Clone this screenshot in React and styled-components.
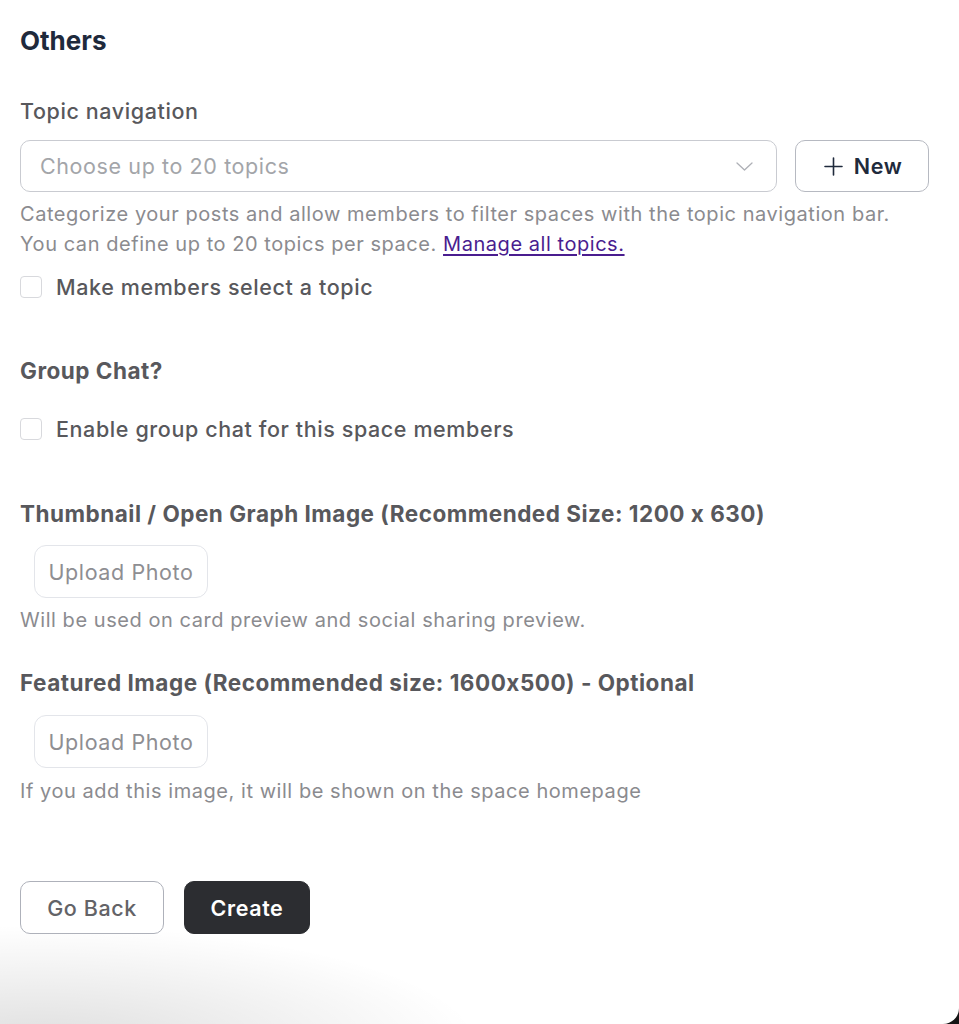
import React from "react";
import styled, { createGlobalStyle } from "styled-components";

const Global = createGlobalStyle`
  html, body { margin: 0; padding: 0; background: #141414; }
  body { font-family: Inter, "Noto Sans", "Liberation Sans", sans-serif; -webkit-font-smoothing: antialiased; }
  * { box-sizing: border-box; }
`;

const Page = styled.div`
  width: 959px;
  height: 1024px;
  background:
    radial-gradient(ellipse 440px 120px at 40px 1045px, rgba(0,0,0,0.13), rgba(0,0,0,0) 100%),
    #ffffff;
  border-bottom-right-radius: 16px;
  padding: 26px 30px 0 20px;
  display: flex;
  flex-direction: column;
  overflow: hidden;
`;

const Heading = styled.h2`
  margin: 0;
  font-size: 26px;
  line-height: 30px;
  font-weight: 700;
  color: #1f2a3c;
`;

const Label = styled.div`
  margin-top: ${(p) => p.$mt}px;
  font-size: ${(p) => (p.$bold ? "22.5px" : "21.5px")};
  line-height: 30px;
  font-weight: ${(p) => (p.$bold ? 700 : 500)};
  color: #58585c;
  letter-spacing: ${(p) => (p.$bold ? "0.5px" : "0.6px")};
`;

const SelectRow = styled.div`
  margin-top: 14px;
  display: flex;
  gap: 18px;
  width: 909px;
`;

const Select = styled.div`
  flex: 0 0 757px;
  height: 52px;
  border: 1px solid #c9cbd1;
  border-radius: 10px;
  display: flex;
  align-items: center;
  justify-content: space-between;
  padding: 0 23px 0 19px;
  font-size: 21.5px;
  letter-spacing: 0.6px;
  color: #a3a5a9;
`;

const NewButton = styled.button`
  flex: 0 0 134px;
  height: 52px;
  border: 1px solid #b6b9c1;
  border-radius: 10px;
  background: #fff;
  display: flex;
  align-items: center;
  justify-content: center;
  gap: 11px;
  font-family: inherit;
  font-size: 21.5px;
  letter-spacing: 0.6px;
  font-weight: 600;
  color: #1f2a3c;
  padding: 0 0 0 2px;
`;

const Help = styled.p`
  margin: ${(p) => p.$mt}px 0 0;
  font-size: 20px;
  letter-spacing: 0.55px;
  line-height: ${(p) => p.$lh || 30}px;
  color: #8b8b8f;
`;

const Link = styled.a`
  color: #4a1d8f;
  text-decoration: underline;
  text-underline-offset: 3px;
`;

const CheckRow = styled.label`
  margin-top: ${(p) => p.$mt}px;
  display: flex;
  align-items: center;
  gap: 14px;
  height: 30px;
  font-size: 21.5px;
  letter-spacing: 0.6px;
  font-weight: 500;
  color: #58585c;
`;

const Box = styled.span`
  width: 22px;
  height: 22px;
  border: 1px solid #d8d9dd;
  border-radius: 4px;
  background: #fff;
  flex: 0 0 22px;
`;

const UploadButton = styled.button`
  margin-top: ${(p) => p.$mt}px;
  margin-left: 14px;
  align-self: flex-start;
  width: 174px;
  height: 53px;
  border: 1px solid #e3e5ea;
  border-radius: 12px;
  background: #fff;
  font-family: inherit;
  font-size: 21.5px;
  letter-spacing: 0.6px;
  color: #8e8e92;
  padding: 0;
`;

const Actions = styled.div`
  margin-top: 77px;
  display: flex;
  gap: 20px;
`;

const ActionButton = styled.button`
  height: 53px;
  width: ${(p) => p.$w}px;
  border-radius: 10px;
  font-family: inherit;
  font-size: 21.5px;
  letter-spacing: 0.6px;
  padding: 0;
  border: 1px solid ${(p) => (p.$primary ? "#2c2d31" : "#aeb1ba")};
  background: ${(p) => (p.$primary ? "#2c2d31" : "#fff")};
  color: ${(p) => (p.$primary ? "#ffffff" : "#636367")};
  font-weight: ${(p) => (p.$primary ? 600 : 500)};
`;

const Chevron = () => (
  <svg width="17" height="9" viewBox="0 0 17 9" fill="none">
    <path d="M1 1l7.5 7L16 1" stroke="#aeb0b6" strokeWidth="1.3" strokeLinecap="round" strokeLinejoin="round" />
  </svg>
);

const Plus = () => (
  <svg width="19" height="19" viewBox="0 0 19 19" fill="none">
    <path d="M9.5 1v17M1 9.5h17" stroke="#1f2a3c" strokeWidth="1.6" strokeLinecap="round" />
  </svg>
);

export default function App() {
  return (
    <>
      <Global />
      <Page>
        <Heading>Others</Heading>

        <Label $mt={40}>Topic navigation</Label>
        <SelectRow>
          <Select>
            <span>Choose up to 20 topics</span>
            <Chevron />
          </Select>
          <NewButton>
            <Plus />
            New
          </NewButton>
        </SelectRow>
        <Help $mt={7}>
          Categorize your posts and allow members to filter spaces with the topic navigation bar.
          <br />
          You can define up to 20 topics per space. <Link href="#">Manage all topics.</Link>
        </Help>
        <CheckRow $mt={13}>
          <Box />
          Make members select a topic
        </CheckRow>

        <Label $mt={54} $bold>Group Chat?</Label>
        <CheckRow $mt={28}>
          <Box />
          Enable group chat for this space members
        </CheckRow>

        <Label $mt={55} $bold>Thumbnail / Open Graph Image (Recommended Size: 1200 x 630)</Label>
        <UploadButton $mt={16}>Upload Photo</UploadButton>
        <Help $mt={9} $lh={26}>Will be used on card preview and social sharing preview.</Help>

        <Label $mt={35} $bold>Featured Image (Recommended size: 1600x500) - Optional</Label>
        <UploadButton $mt={17}>Upload Photo</UploadButton>
        <Help $mt={10} $lh={26}>If you add this image, it will be shown on the space homepage</Help>

        <Actions>
          <ActionButton $w={144}>Go Back</ActionButton>
          <ActionButton $w={126} $primary>Create</ActionButton>
        </Actions>
      </Page>
    </>
  );
}
